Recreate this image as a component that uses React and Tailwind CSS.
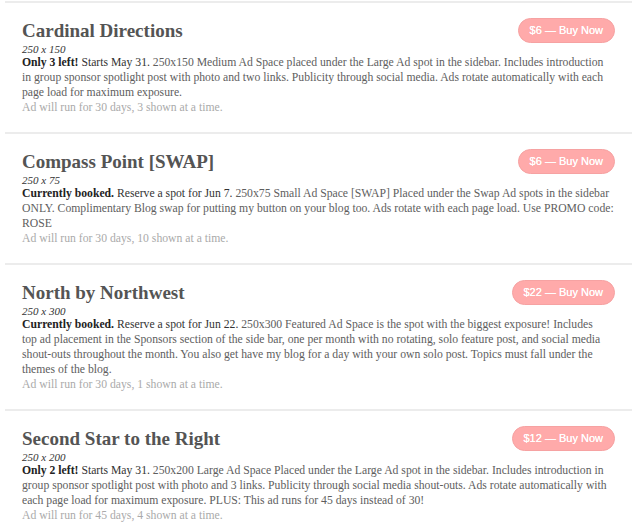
import React from 'react';

const ads = [
    {
        title: 'Cardinal Directions',
        size: '250 x 150',
        price: '$6',
        lead: 'Only 3 left!',
        date: 'Starts May 31.',
        lines: [
            '250x150 Medium Ad Space placed under the Large Ad spot in the sidebar. Includes introduction',
            'in group sponsor spotlight post with photo and two links. Publicity through social media. Ads rotate automatically with each',
            'page load for maximum exposure.',
        ],
        runs: 'Ad will run for 30 days, 3 shown at a time.',
    },
    {
        title: 'Compass Point [SWAP]',
        size: '250 x 75',
        price: '$6',
        lead: 'Currently booked.',
        date: 'Reserve a spot for Jun 7.',
        lines: [
            '250x75 Small Ad Space [SWAP] Placed under the Swap Ad spots in the sidebar',
            'ONLY. Complimentary Blog swap for putting my button on your blog too. Ads rotate with each page load. Use PROMO code:',
            'ROSE',
        ],
        runs: 'Ad will run for 30 days, 10 shown at a time.',
    },
    {
        title: 'North by Northwest',
        size: '250 x 300',
        price: '$22',
        lead: 'Currently booked.',
        date: 'Reserve a spot for Jun 22.',
        lines: [
            '250x300 Featured Ad Space is the spot with the biggest exposure! Includes',
            'top ad placement in the Sponsors section of the side bar, one per month with no rotating, solo feature post, and social media',
            'shout-outs throughout the month. You also get have my blog for a day with your own solo post. Topics must fall under the',
            'themes of the blog.',
        ],
        runs: 'Ad will run for 30 days, 1 shown at a time.',
    },
    {
        title: 'Second Star to the Right',
        size: '250 x 200',
        price: '$12',
        lead: 'Only 2 left!',
        date: 'Starts May 31.',
        lines: [
            '250x200 Large Ad Space Placed under the Large Ad spot in the sidebar. Includes introduction in',
            'group sponsor spotlight post with photo and 3 links. Publicity through social media shout-outs. Ads rotate automatically with',
            'each page load for maximum exposure. PLUS: This ad runs for 45 days instead of 30!',
        ],
        runs: 'Ad will run for 45 days, 4 shown at a time.',
    },
];

function AdRow({ ad }) {
    return (
        <div className="border-t-2 border-[#ececec] px-[17px] pt-[15px] pb-[17px]">
            <div className="flex items-center justify-between h-[25px]">
                <h2 className="text-[19px] font-bold text-[#545454] leading-none">{ad.title}</h2>
                <button className="h-[25px] px-[11px] rounded-full bg-[#ffaaaa] border border-[#f6a2a2] text-white text-[11px] font-['Liberation_Sans',Arial,sans-serif] [text-shadow:0_0_0.4px_#fff]">
                    {ad.price} — Buy Now
                </button>
            </div>
            <div className="text-[11px] italic text-[#333] leading-[12px] h-[12px]">{ad.size}</div>
            <p className="text-[11.7px] leading-[15px] text-[#5e5e5e] whitespace-nowrap">
                <b className="text-[#222]">{ad.lead}</b> <span className="text-[#333]">{ad.date}</span> {ad.lines[0]}
                {ad.lines.slice(1).map((line, i) => (
                    <React.Fragment key={i}>
                        <br />
                        {line}
                    </React.Fragment>
                ))}
            </p>
            <div className="text-[11.7px] leading-[15px] text-[#aaa]">{ad.runs}</div>
        </div>
    );
}

export default function App() {
    return (
        <div className="bg-white min-h-screen pt-[1px] px-[5px] font-['Liberation_Serif',Georgia,serif]">
            <div className="w-[627px] overflow-hidden">
                {ads.map((ad) => (
                    <AdRow key={ad.title} ad={ad} />
                ))}
            </div>
        </div>
    );
}
